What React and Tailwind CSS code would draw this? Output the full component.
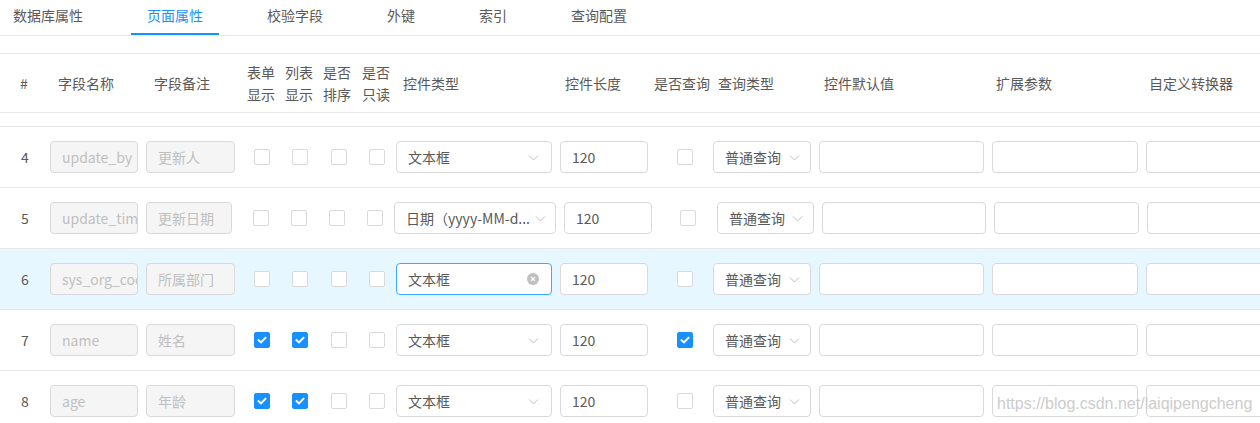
import React from "react";

const tabs = ["数据库属性", "页面属性", "校验字段", "外键", "索引", "查询配置"];

const headerCells = [
  { c: "w-[58px] pl-[20px]", t: ["#"] },
  { c: "w-[96px]", t: ["字段名称"] },
  { c: "w-[93px]", t: ["字段备注"] },
  { c: "w-[38px]", t: ["表单", "显示"] },
  { c: "w-[38px]", t: ["列表", "显示"] },
  { c: "w-[39px]", t: ["是否", "排序"] },
  { c: "w-[41px]", t: ["是否", "只读"] },
  { c: "w-[162px]", t: ["控件类型"] },
  { c: "w-[89px]", t: ["控件长度"] },
  { c: "w-[64px]", t: ["是否查询"] },
  { c: "w-[106px]", t: ["查询类型"] },
  { c: "w-[172px]", t: ["控件默认值"] },
  { c: "w-[153px]", t: ["扩展参数"] },
  { c: "flex-1", t: ["自定义转换器"] },
];

const layoutA = {
  in2: "ml-[8px] w-[89px]",
  cb: ["ml-[19px]", "ml-[22px]", "ml-[23px]", "ml-[22px]"],
  sel: "ml-[11px] w-[156px]",
  selPr: "pr-[12px]",
  len: "ml-[8px] w-[88px]",
  qcb: "ml-[29px]",
  qsel: "ml-[20px] w-[98px]",
  e1: "ml-[8px] w-[165px]",
  e2: "ml-[8px] w-[146px]",
  e3: "ml-[8px] w-[140px]",
};

const layoutB = {
  in2: "ml-[8px] w-[86px]",
  cb: ["ml-[21px]", "ml-[22px]", "ml-[22px]", "ml-[22px]"],
  sel: "ml-[11px] w-[162px]",
  selPr: "pr-[9px]",
  len: "ml-[8px] w-[88px]",
  qcb: "ml-[28px]",
  qsel: "ml-[21px] w-[97px]",
  e1: "ml-[8px] w-[164px]",
  e2: "ml-[8px] w-[145px]",
  e3: "ml-[8px] w-[140px]",
};

const rows = [
  { n: "4", name: "update_by", note: "更新人", form: false, list: false, q: false, type: "文本框", L: layoutA },
  { n: "5", name: "update_time", note: "更新日期", form: false, list: false, q: false, type: "日期（yyyy-MM-d...", L: layoutB },
  { n: "6", name: "sys_org_code", note: "所属部门", form: false, list: false, q: false, type: "文本框", L: layoutA, active: true },
  { n: "7", name: "name", note: "姓名", form: true, list: true, q: true, type: "文本框", L: layoutA },
  { n: "8", name: "age", note: "年龄", form: true, list: true, q: false, type: "文本框", L: layoutA },
];

function Checkbox({ checked, className = "" }) {
  return (
    <div
      className={
        "w-[16px] h-[16px] shrink-0 rounded-[2px] border flex items-center justify-center " +
        (checked ? "bg-[#1890ff] border-[#1890ff] " : "bg-white border-[#d9d9d9] ") +
        className
      }
    >
      {checked && (
        <svg width="12" height="12" viewBox="0 0 12 12">
          <path d="M2.6 6.2 L5 8.4 L9.4 3.8" fill="none" stroke="white" strokeWidth="2" strokeLinecap="square" />
        </svg>
      )}
    </div>
  );
}

function Chevron() {
  return (
    <svg width="11" height="11" viewBox="0 0 11 11" className="shrink-0">
      <path d="M1 3.5 L5.5 8 L10 3.5" fill="none" stroke="#bfbfbf" strokeWidth="1" />
    </svg>
  );
}

function ClearIcon() {
  return (
    <svg width="12" height="12" viewBox="0 0 12 12" className="shrink-0">
      <circle cx="6" cy="6" r="6" fill="#bfbfbf" />
      <path d="M4 4 L8 8 M8 4 L4 8" stroke="white" strokeWidth="1.2" />
    </svg>
  );
}

function Input({ value, disabled, className = "" }) {
  return (
    <div
      className={
        "h-[32px] shrink-0 rounded-[4px] border border-[#d9d9d9] px-[11px] flex items-center overflow-hidden whitespace-nowrap text-[14px] " +
        (disabled ? "bg-[#f5f5f5] text-[#bfbfbf] " : "bg-white text-[#595959] ") +
        className
      }
    >
      {value}
    </div>
  );
}

function Select({ value, focused, className = "", pr = "pr-[12px]" }) {
  return (
    <div
      className={
        "h-[32px] shrink-0 rounded-[4px] border bg-white pl-[11px] flex items-center gap-[2px] text-[14px] text-[#595959] " +
        pr +
        " " +
        (focused ? "border-[#40a9ff] " : "border-[#d9d9d9] ") +
        className
      }
    >
      <span className="flex-1 whitespace-nowrap overflow-hidden">{value}</span>
      {focused ? <ClearIcon /> : <Chevron />}
    </div>
  );
}

function Row({ r }) {
  const L = r.L;
  return (
    <div
      className={
        "h-[61px] border-t border-[#e8e8e8] flex items-center overflow-hidden " +
        (r.active ? "bg-[#e6f7ff]" : "bg-white")
      }
    >
      <div className="w-[50px] shrink-0 pl-[21px] text-[14px] text-[#595959]">{r.n}</div>
      <Input value={r.name} disabled className="w-[88px]" />
      <Input value={r.note} disabled className={L.in2} />
      <Checkbox checked={r.form} className={L.cb[0]} />
      <Checkbox checked={r.list} className={L.cb[1]} />
      <Checkbox checked={false} className={L.cb[2]} />
      <Checkbox checked={false} className={L.cb[3]} />
      <Select value={r.type} focused={r.active} className={L.sel} pr={L.selPr} />
      <Input value="120" className={L.len} />
      <Checkbox checked={r.q} className={L.qcb} />
      <Select value="普通查询" className={L.qsel} pr="pr-[10px]" />
      <Input value="" className={L.e1} />
      <Input value="" className={L.e2} />
      <Input value="" className={L.e3} />
    </div>
  );
}

export default function App() {
  return (
    <div className="relative w-[1260px] h-[423px] overflow-hidden bg-white font-['Noto_Sans_CJK_SC',sans-serif] text-[#595959]">
      {/* Tabs */}
      <div className="h-[36px] border-b border-[#e8e8e8] flex ml-[-3px] gap-[32px]">
        {tabs.map((t, i) => (
          <div
            key={t}
            className={
              "relative h-[35px] px-[16px] pt-[4px] text-[14px] leading-[22px] " +
              (i === 1 ? "text-[#1890ff]" : "text-[#595959]")
            }
          >
            {t}
            {i === 1 && <div className="absolute left-0 right-0 bottom-0 h-[2px] bg-[#1890ff]" />}
          </div>
        ))}
      </div>

      {/* Header */}
      <div className="mt-[17px] h-[60px] border-t border-b border-[#e8e8e8] flex items-center text-[14px] leading-[22px] text-[#595959]">
        {headerCells.map((h, i) => (
          <div key={i} className={"shrink-0 " + h.c}>
            {h.t.map((line, j) => (
              <div key={j} className="whitespace-nowrap">
                {line}
              </div>
            ))}
          </div>
        ))}
      </div>

      <div className="h-[13px]" />

      {rows.map((r) => (
        <Row key={r.n} r={r} />
      ))}

      <div className="absolute left-[997px] top-[395px] text-[16px] leading-[18px] font-['Liberation_Sans',Arial,sans-serif] text-[#cccccc]">
        https://blog.csdn.net/laiqipengcheng
      </div>
    </div>
  );
}
